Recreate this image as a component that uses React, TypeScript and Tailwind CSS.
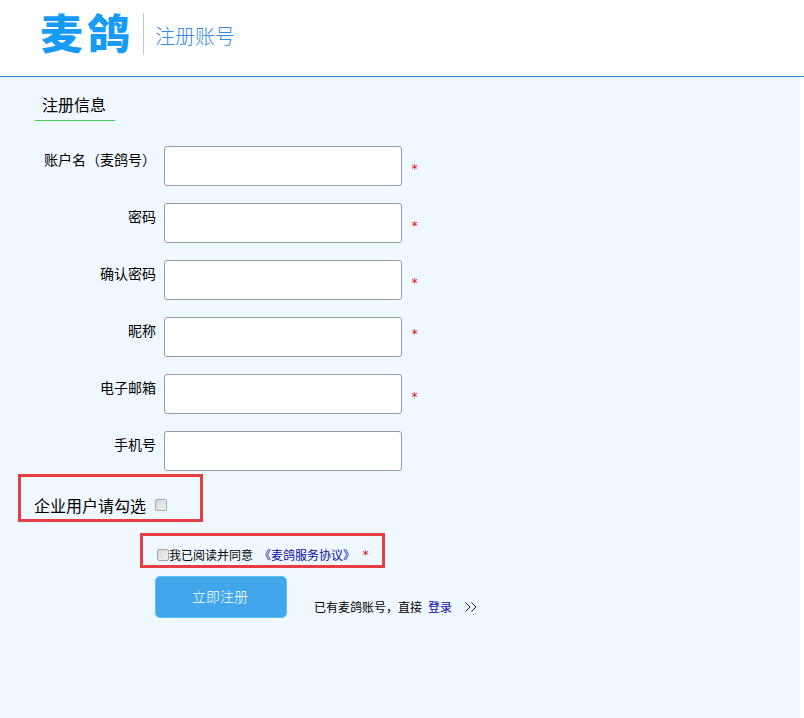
interface Field {
  id: string
  label: string
  type: string
  mark?: string
}

const fields: Field[] = [
  { id: 'account', label: '账户名（麦鸽号）', type: 'text', mark: 'pt-[13px]' },
  { id: 'password', label: '密码', type: 'password', mark: 'pt-[13px]' },
  { id: 'confirm', label: '确认密码', type: 'password', mark: 'pt-[13px]' },
  { id: 'nickname', label: '昵称', type: 'text', mark: 'pt-[7px]' },
  { id: 'email', label: '电子邮箱', type: 'email', mark: 'pt-[13px]' },
  { id: 'phone', label: '手机号', type: 'tel' },
]

function Header() {
  return (
    <header className="flex h-[77px] items-start border-b border-[#2687c9] bg-white pl-10">
      <div className="mt-2 flex h-[46px] w-[103px] scale-y-[0.95] items-center gap-[4px] text-[43px] leading-[46px] font-black text-[#169bf8]">
        <span>麦</span>
        <span>鸽</span>
      </div>
      <div className="mt-[13px] h-[42px] w-px bg-[#b9c6d4]" />
      <h1 className="mt-[21px] ml-[11px] text-[20px] leading-[30px] font-light text-[#3689dd]">
        注册账号
      </h1>
    </header>
  )
}

function FieldRow({ field }: { field: Field }) {
  return (
    <div className="flex h-10 items-start">
      <label
        htmlFor={field.id}
        className="w-[156px] pt-[3px] text-right text-sm leading-5 whitespace-nowrap"
      >
        {field.label}
      </label>
      <input
        id={field.id}
        type={field.type}
        className="ml-2 h-10 w-[238px] rounded-[3px] border border-[#969ca3] bg-white px-2 text-sm outline-none"
      />
      {field.mark && (
        <span className={`ml-[9px] ${field.mark}`}>
          <Asterisk />
        </span>
      )}
    </div>
  )
}

function Asterisk() {
  return (
    <span className="block h-5 w-[7px] font-['DejaVu_Sans_Mono'] text-[12px] leading-[21px] text-[#d3101c]">
      *
    </span>
  )
}

function Checkbox({ id }: { id: string }) {
  return (
    <input
      id={id}
      type="checkbox"
      className="h-3 w-3 shrink-0 appearance-none rounded-[2px] border border-[#a3a5a8] bg-linear-to-br from-[#d6d8da] to-[#eeefef]"
    />
  )
}

export default function App() {
  return (
    <div className="relative h-[718px] w-[804px] overflow-hidden bg-white font-['Noto_Sans_CJK_SC',sans-serif] text-black">
      <Header />
      <main className="h-[641px] w-[800px] bg-[#eff7ff]">
        {/* 标题 */}
        <div className="pt-3.5 pl-[35px]">
          <h2 className="h-[30px] w-20 border-b border-[#3fcf4e] pl-[7px] text-base leading-[27px]">
            注册信息
          </h2>
        </div>

        <form className="pt-[25px]">
          <div className="flex flex-col gap-[17px]">
            {fields.map((field) => (
              <FieldRow key={field.id} field={field} />
            ))}
          </div>

          {/* 企业用户 */}
          <div className="mt-[22px] flex h-6 items-center pl-[34px]">
            <label htmlFor="company" className="text-base leading-6">
              企业用户请勾选
            </label>
            <span className="ml-[9px] flex">
              <Checkbox id="company" />
            </span>
          </div>

          {/* 服务协议 */}
          <div className="mt-[28px] flex h-5 items-center pl-[157px] text-xs leading-5">
            <Checkbox id="agree" />
            <label htmlFor="agree" className="w-[90px]">
              我已阅读并同意
            </label>
            <a href="#" className="w-[103px] text-[#0808a8]">
              《麦鸽服务协议》
            </a>
            <Asterisk />
          </div>

          <div className="mt-[11px] flex pl-[155px]">
            <button
              type="button"
              className="h-[42px] w-[132px] rounded-[5px] border border-[#5cc1ef] bg-[#42a7ea] pr-0.5 pb-[3px] text-sm font-light text-white"
            >
              立即注册
            </button>
            <p className="mt-[21px] ml-[27px] flex text-xs leading-5">
              已有麦鸽账号，直接
              <a href="#" className="ml-1.5 text-[#0808a8]">
                登录
              </a>
              <svg
                className="mt-[5px] ml-[13px]"
                width="12"
                height="10"
                viewBox="0 0 12 10"
                fill="none"
                stroke="currentColor"
                strokeWidth="0.9"
              >
                <path d="M0.5 0.5 5 5 0.5 9.5M6.5 0.5 11 5 6.5 9.5" />
              </svg>
            </p>
          </div>
        </form>
      </main>

      {/* 红框标注 */}
      <div className="pointer-events-none absolute top-[474px] left-[18px] h-12 w-[185px] border-3 border-[#e53e43]" />
      <div className="pointer-events-none absolute top-[533px] left-[140px] h-[35px] w-[245px] border-3 border-[#e53e43]" />
    </div>
  )
}
